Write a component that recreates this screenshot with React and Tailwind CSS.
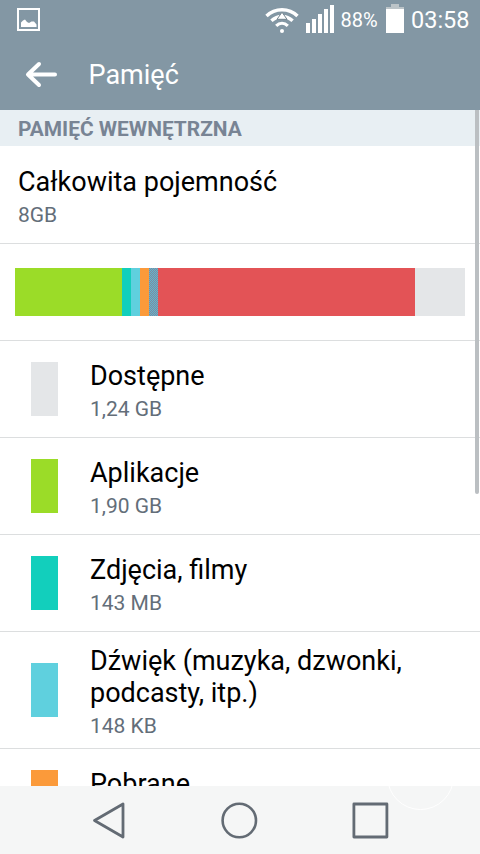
import React from 'react';

// share of the storage bar, in px of its 450px width
const segments = [
  { id: 'apps', width: 107, color: 'bg-[#9bdc28]' },
  { id: 'photos', width: 9, color: 'bg-[#12cfbc]' },
  { id: 'audio', width: 9, color: 'bg-[#5fd0de]' },
  { id: 'downloads', width: 9, color: 'bg-[#fb9a3a]' },
  { id: 'cache', width: 9, color: 'bg-[#6b9eb2] bg-[repeating-conic-gradient(#5fb9cd_0_25%,#8086a0_0_50%)] bg-[length:2px_2px]' },
  { id: 'other', width: 257, color: 'bg-[#e35356]' },
  { id: 'free', width: 50, color: 'bg-[#e4e6e8]' },
];

const categories = [
  { title: ['Dostępne'], size: '1,24 GB', color: 'bg-[#e4e6e8]' },
  { title: ['Aplikacje'], size: '1,90 GB', color: 'bg-[#9bdc28]' },
  { title: ['Zdjęcia, filmy'], size: '143 MB', color: 'bg-[#12cfbc]' },
  { title: ['Dźwięk (muzyka, dzwonki,', 'podcasty, itp.)'], size: '148 KB', color: 'bg-[#5fd0de]' },
  { title: ['Pobrane'], size: '', color: 'bg-[#fb9a3a]' },
];

const WifiIcon = () => (
  <svg width="34" height="28" viewBox="0 0 34 28" fill="none" stroke="#fff">
    <path d="M1.5 11C10 2.6 24 2.6 32.5 11" strokeWidth="3.4" />
    <path d="M6.4 15.8C12.5 10 21.5 10 27.6 15.8" strokeWidth="3.4" />
    <path d="M11.2 20.8C14.6 17.6 19.4 17.6 22.8 20.8" strokeWidth="3.2" />
    <circle cx="17" cy="26" r="2" fill="#fff" stroke="none" />
    <path d="M17 7.2L22 14.3H12Z" fill="#fff" stroke="#74858f" strokeWidth="1" />
  </svg>
);

const StatusBar = () => (
  <div className="flex h-10 shrink-0 items-start text-white">
    <svg className="ml-[17px] mt-2" width="23" height="23" viewBox="0 0 23 23" fill="none">
      <rect x="1" y="1" width="21" height="21" stroke="#fff" strokeWidth="2" />
      <path d="M4 19V14.5L6 12.5L8 11.5L10 14L12 15L14.5 13.5H17L19.5 16.5V19Z" fill="#fff" />
    </svg>
    <div className="ml-auto flex items-start">
      <div className="mt-[5px]"><WifiIcon /></div>
      <div className="ml-[7px] mt-[5px] flex h-7 items-end gap-[2px]">
        <span className="h-[10px] w-1 bg-white" />
        <span className="h-[14px] w-1 bg-white" />
        <span className="h-[19px] w-1 bg-white" />
        <span className="h-6 w-1 bg-white" />
        <span className="h-7 w-1 bg-white" />
      </div>
      <span className="ml-[6.5px] mt-2 w-[37.5px] text-[20px] leading-6 whitespace-nowrap">88%</span>
      <svg className="ml-2 mt-1" width="18" height="29" viewBox="0 0 18 29">
        <path d="M5 0H13V3H18V6H0V3H5Z" fill="#bcc4c8" />
        <rect y="5" width="18" height="24" fill="#fff" />
      </svg>
      <span className="ml-[7px] mr-[11px] mt-[5px] w-[58px] text-[23.5px] leading-[30px] whitespace-nowrap">03:58</span>
    </div>
  </div>
);

const CategoryRow = ({ title, size, color }) => (
  <div className={`flex shrink-0 items-center border-b border-[#dcdedf] ${title.length > 1 ? 'h-[117px]' : 'h-[97px]'}`}>
    <div className={`ml-[31px] h-[54px] w-[27px] ${color}`} />
    <div className={`ml-8 self-start ${title.length > 1 ? 'pt-[13px]' : 'pt-[19px]'}`}>
      {title.map((line) => (
        <div key={line} className="text-[27px] leading-8 whitespace-nowrap text-black">{line}</div>
      ))}
      <div className="mt-[5px] text-[21px] leading-[25px] text-[#636e79]">{size}</div>
    </div>
  </div>
);

const NavBar = () => (
  <div className="relative flex h-[68px] shrink-0 items-center bg-[#f5f6f6]">
    <svg className="ml-[92px]" width="34" height="38" viewBox="0 0 34 38" fill="none">
      <path d="M2.5 19.5L31 3V36Z" stroke="#636b74" strokeWidth="2.8" strokeLinejoin="round" />
    </svg>
    <svg className="ml-[94px]" width="38" height="38" viewBox="0 0 38 38" fill="none">
      <circle cx="19.3" cy="19.5" r="16.7" stroke="#636b74" strokeWidth="2.6" />
    </svg>
    <svg className="ml-[93px]" width="38" height="38" viewBox="0 0 38 38" fill="none">
      <rect x="2.9" y="3" width="33" height="33" stroke="#636b74" strokeWidth="2.8" strokeLinejoin="round" />
    </svg>
    {/* faint touch ring over the bar's edge */}
    <div className="absolute left-[387px] top-0 h-6 w-[67px] overflow-hidden">
      <div className="absolute bottom-0 left-0 h-[67px] w-[67px] rounded-full border border-white" />
    </div>
  </div>
);

const App = () => {
  return (
    <div className="relative flex h-[854px] w-[480px] flex-col overflow-hidden bg-white font-[Roboto,sans-serif]">
      <header className="flex h-[110px] shrink-0 flex-col bg-[#8397a4]">
        <StatusBar />
        <div className="flex h-[70px] items-center text-white">
          <svg className="ml-[25px]" width="33" height="28" viewBox="0 0 33 28" fill="none" stroke="#fff" strokeWidth="4" strokeLinecap="round" strokeLinejoin="round">
            <path d="M14 3L3 13.5L14 24M4 13.5H30" />
          </svg>
          <h1 className="ml-[30.5px] text-[27px] leading-8">Pamięć</h1>
        </div>
      </header>

      <main className="flex min-h-0 flex-1 flex-col overflow-hidden">
        <h2 className="h-9 shrink-0 bg-[#e8eff3] pl-[18px] pt-[7px] text-[20.9px] leading-[25px] font-bold text-[#788494]">PAMIĘĆ WEWNĘTRZNA</h2>
        <div className="h-[98px] shrink-0 border-b border-[#dcdedf] pl-[18px] pt-5">
          <div className="text-[27px] leading-8 text-black">Całkowita pojemność</div>
          <div className="mt-[5px] text-[21px] leading-[25px] text-[#636e79]">8GB</div>
        </div>
        <div className="flex h-[97px] shrink-0 items-center border-b border-[#dcdedf] px-[15px]">
          <div className="flex h-12 w-full">
            {segments.map((s) => (
              <div key={s.id} className={s.color} style={{ width: s.width }} />
            ))}
          </div>
        </div>
        {categories.map((c) => (
          <CategoryRow key={c.title[0]} {...c} />
        ))}
      </main>

      <NavBar />

      {/* scrollbar */}
      <div className="absolute right-[1px] top-[110px] h-[384px] w-1 rounded-b-sm bg-[#bbbfc2]" />
    </div>
  );
};

export default App;
